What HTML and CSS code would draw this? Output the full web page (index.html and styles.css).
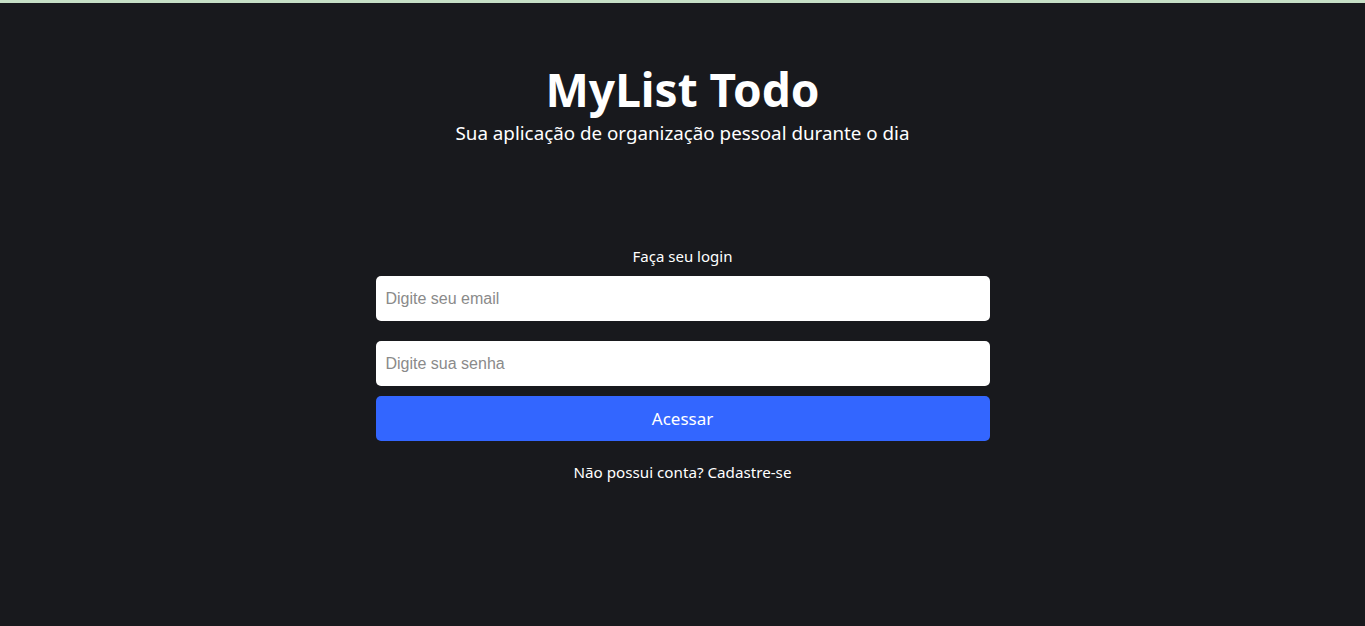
FILE: index.html
```html
<!DOCTYPE html>
<html lang="pt-BR">
<head>
<meta charset="utf-8">
<title>MyList Todo</title>
<link rel="stylesheet" href="styles.css">
</head>
<body>
<div class="topbar"></div>
<main class="page">
  <header class="hero">
    <h1 class="title">MyList Todo</h1>
    <p class="subtitle">Sua aplicação de organização pessoal durante o dia</p>
  </header>
  <form class="login">
    <p class="login-label">Faça seu login</p>
    <input class="field" type="email" placeholder="Digite seu email">
    <input class="field field-gap" type="password" placeholder="Digite sua senha">
    <button class="submit" type="button">Acessar</button>
    <a class="signup" href="#">Não possui conta? Cadastre-se</a>
  </form>
</main>
</body>
</html>
```
FILE: styles.css
```css
html, body {
  margin: 0;
  padding: 0;
  height: 100%;
}
body {
  background: #18191d;
  color: #ffffff;
  font-family: "Noto Sans", "Open Sans", sans-serif;
}
.topbar {
  height: 3px;
  background: #c6dfc6;
}
.page {
  display: flex;
  flex-direction: column;
  align-items: center;
}
.hero {
  display: flex;
  flex-direction: column;
  align-items: center;
  margin-top: 57px;
}
.title {
  margin: 0;
  font-size: 46px;
  line-height: 58px;
  font-weight: 700;
}
.subtitle {
  margin: 3px 0 0;
  font-size: 18.8px;
  line-height: 24px;
}
.login {
  width: 614px;
  margin-top: 101px;
  display: flex;
  flex-direction: column;
  align-items: center;
}
.login-label {
  margin: 0 0 10px;
  font-size: 15px;
  line-height: 20px;
}
.field {
  box-sizing: border-box;
  width: 100%;
  height: 45px;
  border: none;
  border-radius: 5px;
  padding: 0 10px;
  background: #ffffff;
  font-family: "Liberation Sans", Arial, sans-serif;
  font-size: 16px;
  color: #222;
  outline: none;
}
.field::placeholder {
  color: #8a8a8a;
}
.field-gap {
  margin-top: 20px;
}
.submit {
  box-sizing: border-box;
  width: 100%;
  height: 45px;
  margin-top: 10px;
  border: none;
  border-radius: 5px;
  background: #3366ff;
  color: #ffffff;
  font-family: "Noto Sans", "Open Sans", sans-serif;
  font-size: 17px;
  cursor: pointer;
}
.signup {
  margin-top: 21px;
  font-size: 15.2px;
  line-height: 20px;
  color: #ffffff;
  text-decoration: none;
}
```
